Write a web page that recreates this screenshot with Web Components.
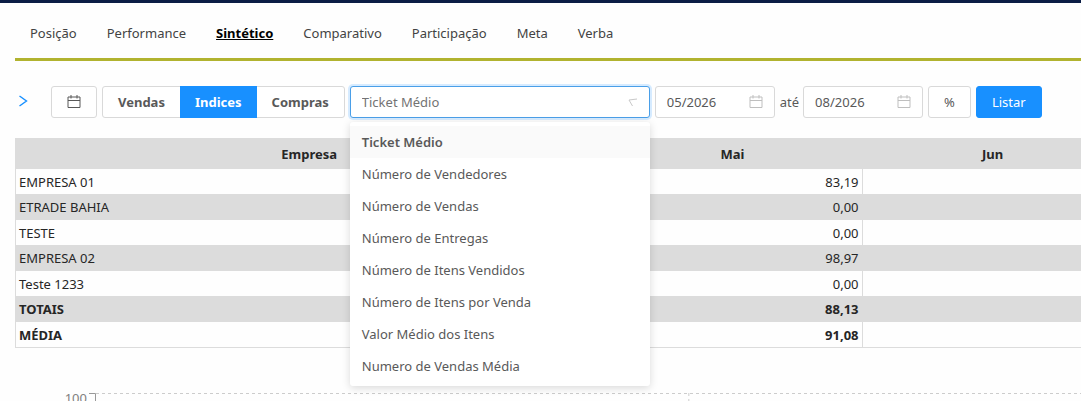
<!DOCTYPE html>
<html lang="pt-BR">
<head>
<meta charset="utf-8">
<meta name="viewport" content="width=device-width, initial-scale=1">
<title>Sintético</title>
<style>
  :root {
    --primary-color: #1890ff;
    --border-color: #d9d9d9;
    --text-color: #595959;
    --row-color: #dcdcdc;
  }

  body {
    margin: 0;
    background: #fefefe;
    color: var(--text-color);
    font-family: "Noto Sans", "Open Sans", sans-serif;
    font-size: 13px;
  }
</style>
</head>
<body>
<report-page>
  <nav-tabs slot="tabs" items="Posição,Performance,Sintético,Comparativo,Participação,Meta,Verba" active="Sintético"></nav-tabs>
  <filter-bar slot="filters">
    <toggle-arrow></toggle-arrow>
    <app-button label="Calendário"><calendar-icon></calendar-icon></app-button>
    <button-group items="Vendas,Indices,Compras" active="Indices"></button-group>
    <select-box label="Índice" items="Ticket Médio,Número de Vendedores,Número de Vendas,Número de Entregas,Número de Itens Vendidos,Número de Itens por Venda,Valor Médio dos Itens,Numero de Vendas Média"></select-box>
    <month-field label="Mês inicial" value="05/2026"></month-field>
    <month-field label="Mês final" value="08/2026">até</month-field>
    <app-button>%</app-button>
    <app-button primary>Listar</app-button>
  </filter-bar>
  <report-table></report-table>
  <report-chart></report-chart>
</report-page>

<script>
class BaseElement extends HTMLElement {
  constructor() {
    super();
    this.attachShadow({ mode: "open" });
  }

  get items() {
    return (this.getAttribute("items") || "").split(",");
  }

  connectedCallback() {
    this.shadowRoot.innerHTML = /* html */`
    <style>
      *, *::before { box-sizing: border-box; }
      ${this.constructor.styles}
    </style>
    ${this.render()}`;
    this.init();
  }

  init() {}
}

class ReportPage extends BaseElement {
  static get styles() {
    return /* css */`
      :host {
        display: flex;
        flex-direction: column;
        height: 100vh;
        overflow: hidden;
        border-top: 3px solid #0b1d45;
        box-sizing: border-box;
      }

      main {
        display: flex;
        flex-direction: column;
        padding-left: 15px;
      }
    `;
  }

  render() {
    return /* html */`
    <slot name="tabs"></slot>
    <main>
      <slot name="filters"></slot>
      <slot></slot>
    </main>`;
  }
}

class NavTabs extends BaseElement {
  static get styles() {
    return /* css */`
      :host {
        display: block;
        margin-left: 15px;
        border-bottom: 3px solid #b1b32f;
      }

      nav {
        display: flex;
        gap: 30px;
        padding: 20px 15px 15px;
        line-height: 20px;
      }

      a {
        color: #434343;
        text-decoration: none;
      }

      a[aria-current] {
        color: #000;
        font-weight: 700;
        text-decoration: underline;
      }
    `;
  }

  render() {
    const active = this.getAttribute("active");
    return /* html */`<nav>${this.items.map( item => `<a href="#"${item === active ? ' aria-current="page"' : ""}>${item}</a>`).join("")}</nav>`;
  }
}

class FilterBar extends BaseElement {
  static get styles() {
    return /* css */`
      :host {
        display: flex;
        align-items: center;
        gap: 5px;
        padding: 25px 15px 20px 0;
      }
    `;
  }

  render() {
    return /* html */`<slot></slot>`;
  }
}

class ToggleArrow extends BaseElement {
  static get styles() {
    return /* css */`
      :host {
        display: flex;
        width: 31px;
      }

      button {
        display: flex;
        padding: 0;
        border: 0;
        background: none;
        color: var(--primary-color);
      }
    `;
  }

  render() {
    return /* html */`
    <button type="button" aria-label="Expandir filtros">
      <svg width="16" height="16" viewBox="0 0 16 16" fill="none" stroke="currentColor" stroke-width="1.4"><path d="M4.5 2 11.5 7 4.5 12"/></svg>
    </button>`;
  }
}

class CalendarIcon extends BaseElement {
  static get styles() {
    return /* css */`
      :host {
        display: flex;
      }
    `;
  }

  render() {
    return /* html */`
    <svg width="14" height="14" viewBox="0 0 14 14" fill="none" stroke="currentColor">
      <path d="M1 2H13V12.5H1ZM1 5.5H13M4 0V3.5M10 0V3.5"/>
    </svg>`;
  }
}

class AppButton extends BaseElement {
  static get styles() {
    return /* css */`
      :host {
        display: flex;
      }

      button {
        display: flex;
        align-items: center;
        height: 32px;
        padding: 0 15px;
        border: 1px solid var(--border-color);
        border-radius: 3px;
        background: #fff;
        color: var(--text-color);
        font: inherit;
      }

      :host([primary]) button {
        border-color: var(--primary-color);
        background: var(--primary-color);
        color: #fff;
      }
    `;
  }

  render() {
    const label = this.getAttribute("label");
    return /* html */`<button type="button"${label ? ` aria-label="${label}"` : ""}><slot></slot></button>`;
  }
}

class ButtonGroup extends BaseElement {
  static get styles() {
    return /* css */`
      :host {
        display: flex;
        height: 32px;
        border: 1px solid var(--border-color);
        border-radius: 3px;
        background: #fff;
        box-sizing: border-box;
      }

      button {
        margin: -1px 0;
        padding: 0 15px;
        border: 0;
        background: none;
        color: var(--text-color);
        font: inherit;
        font-weight: 700;
      }

      button[aria-pressed="true"] {
        background: var(--primary-color);
        color: #fff;
      }
    `;
  }

  render() {
    const active = this.getAttribute("active");
    return this.items.map( item => `<button type="button" aria-pressed="${item === active}">${item}</button>`).join("");
  }

  init() {
    const buttons = this.shadowRoot.querySelectorAll("button");
    buttons.forEach( button => button.addEventListener("click", () => {
      buttons.forEach( other => other.setAttribute("aria-pressed", other === button));
    }));
  }
}

class SelectBox extends BaseElement {
  static get styles() {
    return /* css */`
      :host {
        display: block;
        position: relative;
        flex: 0 1 300px;
      }

      .field {
        display: grid;
        align-items: center;
      }

      select, svg {
        grid-area: 1 / 1;
      }

      select {
        appearance: none;
        width: 100%;
        height: 32px;
        padding: 0 11px;
        border: 1px solid #4a9fe8;
        border-radius: 3px;
        outline: 0;
        box-shadow: 0 0 0 2px #d6ebff;
        background: #fff;
        color: #737373;
        font: inherit;
      }

      svg {
        justify-self: end;
        margin-right: 11px;
        pointer-events: none;
      }

      ul {
        position: absolute;
        z-index: 1;
        top: 36px;
        left: 0;
        right: 0;
        margin: 0;
        padding: 4px 0;
        border-radius: 3px;
        background: #fff;
        box-shadow: 0 2px 8px #00000026;
        list-style: none;
      }

      li {
        padding: 0 12px;
        line-height: 32px;
      }

      li[aria-selected="true"] {
        background: #fafafa;
        font-weight: 600;
      }
    `;
  }

  render() {
    return /* html */`
    <div class="field">
      <select aria-label="${this.getAttribute("label")}">${this.items.map( item => `<option>${item}</option>`).join("")}</select>
      <svg width="12" height="12" viewBox="0 0 12 12" fill="none" stroke="#c8c8c8"><path d="M10 3 2 4 5.5 10"/></svg>
    </div>
    <ul role="listbox">${this.items.map( (item, i) => `<li role="option" aria-selected="${i === 0}">${item}</li>`).join("")}</ul>`;
  }

  init() {
    const select = this.shadowRoot.querySelector("select");
    const options = this.shadowRoot.querySelectorAll("li");
    options.forEach( (option, i) => option.addEventListener("click", () => {
      select.selectedIndex = i;
      options.forEach( other => other.setAttribute("aria-selected", other === option));
    }));
  }
}

class MonthField extends BaseElement {
  static get styles() {
    return /* css */`
      :host {
        display: flex;
      }

      label {
        display: flex;
        align-items: center;
        gap: 4px;
      }

      .field {
        display: flex;
        align-items: center;
        width: 120px;
        height: 32px;
        padding: 0 11px;
        border: 1px solid var(--border-color);
        border-radius: 3px;
        background: #fff;
      }

      input {
        flex: 1;
        min-width: 0;
        padding: 0;
        border: 0;
        outline: 0;
        background: none;
        color: inherit;
        font: inherit;
      }

      calendar-icon {
        color: #bfbfbf;
      }
    `;
  }

  render() {
    return /* html */`
    <label>
      <slot></slot>
      <span class="field">
        <input type="text" aria-label="${this.getAttribute("label")}" value="${this.getAttribute("value")}">
        <calendar-icon></calendar-icon>
      </span>
    </label>`;
  }
}

class ReportTable extends BaseElement {
  static get styles() {
    return /* css */`
      :host {
        display: block;
        overflow: hidden;
      }

      /* the last month runs past the right edge */
      table {
        width: 104%;
        border: 1px solid var(--row-color);
        border-spacing: 0;
        table-layout: fixed;
        color: #262626;
        font-size: 13px;
        line-height: 19px;
      }

      thead th {
        height: 30px;
        padding: 0;
        background: var(--row-color);
      }

      thead th:first-child {
        width: 53%;
      }

      tbody th, td {
        padding: 4px 3px 2px;
        border-right: 1px solid var(--row-color);
        font-weight: 400;
        text-align: right;
      }

      tbody th {
        text-align: left;
      }

      tbody tr:nth-child(even) > * {
        border-bottom: 1px solid var(--row-color);
        background: var(--row-color);
      }

      tbody tr:nth-last-child(-n + 2) > * {
        font-weight: 700;
      }
    `;
  }

  get rows() {
    return [
      ["EMPRESA 01", "83,19"],
      ["ETRADE BAHIA", "0,00"],
      ["TESTE", "0,00"],
      ["EMPRESA 02", "98,97"],
      ["Teste 1233", "0,00"],
      ["TOTAIS", "88,13"],
      ["MÉDIA", "91,08"]
    ];
  }

  render() {
    return /* html */`
    <table>
      <thead><tr><th scope="col">Empresa</th><th scope="col">Mai</th><th scope="col">Jun</th></tr></thead>
      <tbody>
        ${this.rows.map( ([name, value]) => `<tr><th scope="row">${name}</th><td>${value}</td><td></td></tr>`).join("")}
      </tbody>
    </table>`;
  }
}

class ReportChart extends BaseElement {
  static get styles() {
    return /* css */`
      :host {
        display: block;
        padding: 35px 0 0 50px;
      }

      svg {
        display: block;
        width: 100%;
        height: 300px;
      }

      .axis {
        stroke: #999;
      }

      .grid {
        stroke: #ccc;
        stroke-dasharray: 3 3;
      }
    `;
  }

  render() {
    return /* html */`
    <svg role="img" aria-label="Gráfico">
      <text x="22" y="20" text-anchor="end" fill="#808080">100</text>
      <path class="axis" fill="none" d="M24 10.5H30.5V300"/>
      <line class="grid" x1="31" y1="10.5" x2="100%" y2="10.5"/>
      <line class="grid" x1="61.4%" y1="10" x2="61.4%" y2="300"/>
    </svg>`;
  }
}

customElements.define("report-page", ReportPage);
customElements.define("nav-tabs", NavTabs);
customElements.define("filter-bar", FilterBar);
customElements.define("toggle-arrow", ToggleArrow);
customElements.define("calendar-icon", CalendarIcon);
customElements.define("app-button", AppButton);
customElements.define("button-group", ButtonGroup);
customElements.define("select-box", SelectBox);
customElements.define("month-field", MonthField);
customElements.define("report-table", ReportTable);
customElements.define("report-chart", ReportChart);
</script>
</body>
</html>
